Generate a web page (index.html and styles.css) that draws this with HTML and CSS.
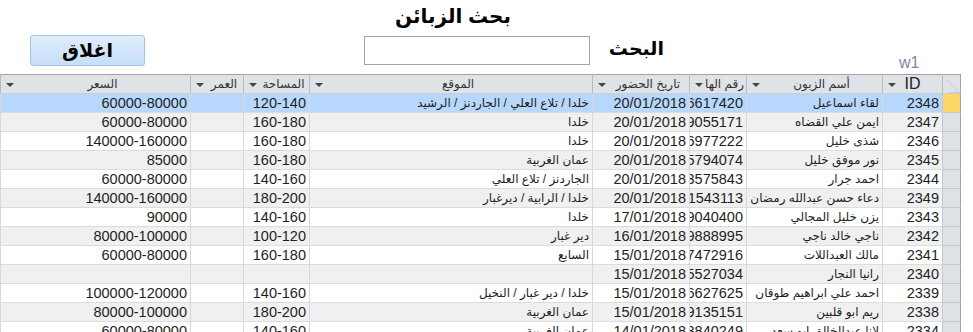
FILE: index.html
```html
<!DOCTYPE html>
<html lang="ar">
<head>
    <meta charset="UTF-8">
    <meta name="viewport" content="width=device-width, initial-scale=1.0">
    <title>بحث الزبائن</title>
    <link rel="stylesheet" href="styles.css">
</head>
<body>

    <header class="top">
        <h1 class="title">بحث الزبائن</h1>
        <div class="search-row">
            <button type="button" class="close-btn">اغلاق</button>
            <input type="text" class="search-input">
            <label class="search-label">البحث</label>
            <span class="form-name">w1</span>
        </div>
    </header>

    <table class="sheet" dir="rtl">
        <colgroup>
            <col style="width: 18px">
            <col style="width: 60px">
            <col style="width: 136px">
            <col style="width: 57px">
            <col style="width: 97px">
            <col style="width: 283px">
            <col style="width: 66px">
            <col style="width: 53px">
            <col style="width: 190px">
        </colgroup>
        <thead>
            <tr>
                <th class="sel-head">
                    <svg width="13" height="13" viewBox="0 0 13 13"><path d="M0.5 0.5 L12.5 12.5 L0.5 12.5" fill="none" stroke="#c9cdd3" stroke-width="1"/></svg>
                </th>
                <th class="id-head"><span class="drop"></span>ID</th>
                <th><span class="drop"></span>أسم الزبون</th>
                <th><span class="drop"></span>رقم الها</th>
                <th><span class="drop"></span>تاريخ الحضور</th>
                <th><span class="drop"></span>الموقع</th>
                <th><span class="drop"></span>المساحة</th>
                <th><span class="drop"></span>العمر</th>
                <th><span class="drop"></span>السعر</th>
            </tr>
        </thead>
        <tbody id="rows"></tbody>
    </table>

    <script>
    var customers = [
        ['2348', 'لقاء اسماعيل', '6617420', '20/01/2018', 'خلدا / تلاع العلي / الجاردنز / الرشيد', '120-140', '', '60000-80000'],
        ['2347', 'ايمن علي القضاه', '9055171', '20/01/2018', 'خلدا', '160-180', '', '60000-80000'],
        ['2346', 'شذى خليل', '6977222', '20/01/2018', 'خلدا', '160-180', '', '140000-160000'],
        ['2345', 'نور موفق خليل', '5794074', '20/01/2018', 'عمان الغربية', '160-180', '', '85000'],
        ['2344', 'احمد جرار', '3575843', '20/01/2018', 'الجاردنز / تلاع العلي', '140-160', '', '60000-80000'],
        ['2349', 'دعاء حسن عبدالله رمضان', '1543113', '20/01/2018', 'خلدا / الرابية / ديرغبار', '180-200', '', '140000-160000'],
        ['2343', 'يزن خليل المجالي', '9040400', '17/01/2018', 'خلدا', '140-160', '', '90000'],
        ['2342', 'ناجي خالد ناجي', '9888995', '16/01/2018', 'دير غبار', '100-120', '', '80000-100000'],
        ['2341', 'مالك العبداللات', '7472916', '15/01/2018', 'السابع', '160-180', '', '60000-80000'],
        ['2340', 'رانيا النجار', '5527034', '15/01/2018', '', '', '', ''],
        ['2339', 'احمد علي ابراهيم طوقان', '6627625', '15/01/2018', 'خلدا / دير غبار / النخيل', '140-160', '', '100000-120000'],
        ['2338', 'ريم ابو قلبين', '9135151', '15/01/2018', 'عمان الغربية', '180-200', '', '80000-100000'],
        ['2334', 'لانا عبدالخالق ابو سعد', '3840249', '14/01/2018', 'عمان الغربية', '140-160', '', '60000-80000']
    ];

    var kinds = ['num', 'ar', 'num', 'num', 'ar', 'num', 'num', 'num'];
    var tbody = document.getElementById('rows');

    customers.forEach(function (row, i) {
        var tr = document.createElement('tr');
        if (i === 0) tr.className = 'current';
        var sel = document.createElement('td');
        sel.className = 'sel';
        tr.appendChild(sel);
        row.forEach(function (value, c) {
            var td = document.createElement('td');
            td.className = kinds[c];
            td.textContent = value;
            tr.appendChild(td);
        });
        tbody.appendChild(tr);
    });
    </script>

</body>
</html>
```

FILE: styles.css
```css
html, body {
    overflow: hidden;
}

body {
    margin: 0;
    padding: 0;
    background-color: #fff;
    font-family: "Liberation Sans", "DejaVu Sans", sans-serif;
    color: #1e1e1e;
}

.top {
    height: 74px;
}

.title {
    width: 906px;
    margin: 0;
    padding-top: 2px;
    height: 30px;
    text-align: center;
    font-size: 20px;
    font-weight: bold;
    line-height: 28px;
    color: #000;
}

.search-row {
    display: flex;
    align-items: flex-start;
    padding-left: 30px;
    padding-top: 3px;
}

.close-btn {
    width: 115px;
    height: 31px;
    margin: 0;
    border: 1px solid #9fc3e9;
    border-radius: 3px;
    background: linear-gradient(#e1edfb, #c5def8);
    font-family: "Liberation Sans", "DejaVu Sans", sans-serif;
    font-size: 19px;
    font-weight: bold;
    color: #000;
    padding: 0;
}

.search-input {
    width: 226px;
    height: 29px;
    margin: 1px 0 0 219px;
    padding: 0;
    border: 1px solid #a5a5a5;
    box-sizing: border-box;
}

.search-label {
    width: 56px;
    margin-left: 18px;
    margin-top: 2px;
    font-size: 19px;
    font-weight: bold;
    color: #000;
    text-align: right;
}

.form-name {
    margin-left: 235px;
    margin-top: 20px;
    font-size: 16px;
    color: #8a7fa6;
    line-height: 16px;
}

.sheet {
    table-layout: fixed;
    border-collapse: collapse;
    width: 960px;
    border-top: 1px solid #a3a3a3;
    border-right: 1px solid #a3a3a3;
}

.sheet th {
    position: relative;
    height: 18px;
    padding: 0 2px 0 16px;
    background-color: #dfe3e8;
    border-left: 1px solid #b6bcc4;
    border-bottom: 1px solid #c9ced4;
    font-size: 12px;
    font-weight: normal;
    color: #333;
    white-space: nowrap;
    overflow: hidden;
    text-align: center;
}

.sheet th.id-head {
    padding: 0 2px;
    font-size: 16px;
    color: #222;
}

.drop {
    position: absolute;
    left: 5px;
    top: 8px;
    width: 0;
    height: 0;
    border-left: 4px solid transparent;
    border-right: 4px solid transparent;
    border-top: 4px solid #444;
}

.sheet th.sel-head {
    padding: 0;
    vertical-align: bottom;
}

.sel-head svg {
    display: block;
    margin-left: 1px;
}

.sheet td {
    height: 18px;
    padding: 0 3px;
    border-left: 1px solid #d8d8d8;
    border-bottom: 1px solid #dcdcdc;
    white-space: nowrap;
    overflow: hidden;
    text-align: right;
    line-height: 18px;
}

.sheet tbody tr:nth-child(even) td {
    background-color: #f0f0f0;
}

.sheet tbody tr.current td {
    background-color: #b7d8fc;
}

.sheet td.num {
    font-size: 14.5px;
}

.sheet td.ar {
    font-size: 12px;
}

.sheet td.sel,
.sheet tbody tr:nth-child(even) td.sel {
    padding: 0;
    background-color: #dfe3e8;
    border-bottom: 1px solid #c3c8cf;
    border-left: 1px solid #c3c8cf;
}

.sheet tbody tr.current td.sel {
    background-color: #fdd766;
}
```
